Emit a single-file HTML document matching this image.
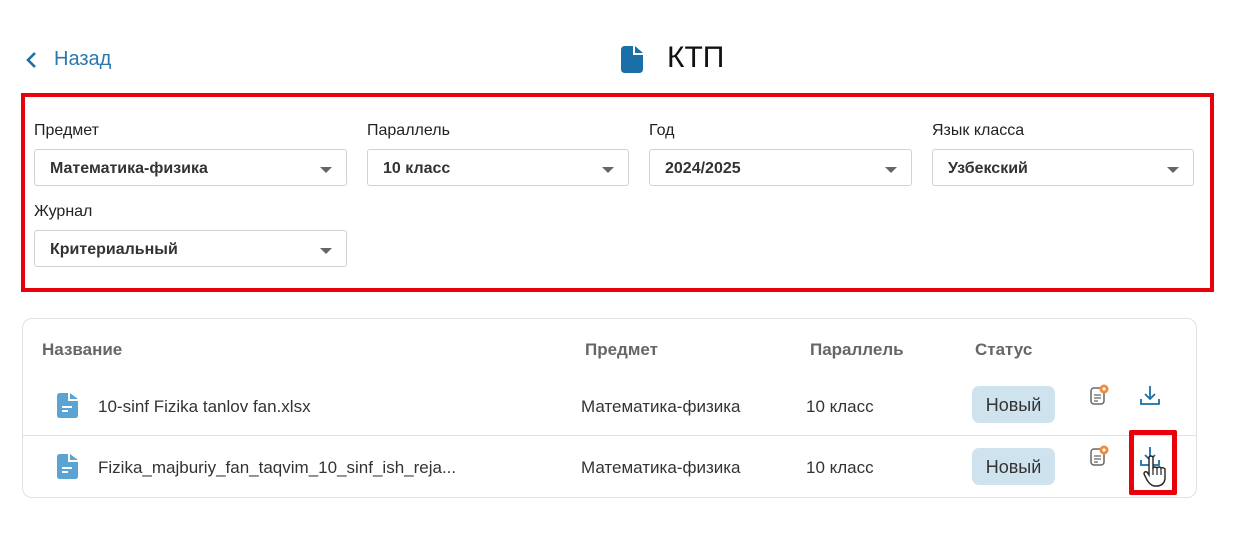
<!DOCTYPE html>
<html><head><meta charset="utf-8"><style>
*{box-sizing:border-box;margin:0;padding:0}
body{width:1258px;height:541px;background:#fff;font-family:"Liberation Sans",sans-serif;position:relative;overflow:hidden;color:#222}
.abs{position:absolute}
.lbl{font-size:16px;color:#222}
.sel{position:absolute;height:37px;border:1px solid #cfd3d8;border-radius:3px;font-weight:bold;font-size:16px;color:#333;padding:10px 0 0 15px}
.sel:after{content:"";position:absolute;right:14px;top:17px;border-left:6px solid transparent;border-right:6px solid transparent;border-top:6px solid #666}
.th{font-weight:bold;font-size:17px;color:#666}
.td{font-size:17px;color:#333}
.badge{position:absolute;width:83px;height:37px;background:#cfe3ee;border-radius:7px;font-size:18px;color:#333;text-align:center;line-height:38px}
</style></head><body>
<svg class="abs" style="left:25px;top:51px" width="14" height="18" viewBox="0 0 14 18"><path d="M10 2 L3 9 L10 16" fill="none" stroke="#1a6fa8" stroke-width="2.6"/></svg>
<div class="abs" style="left:54px;top:48px;font-size:20px;color:#2a78ad">Назад</div>
<svg class="abs" style="left:621px;top:46px" width="22" height="27" viewBox="0 0 22 27"><path d="M4 0 H12 V9 H22 V23 Q22 27 18 27 H4 Q0 27 0 23 V4 Q0 0 4 0Z M14 0 L22 7 H14Z" fill="#1a6fa8"/></svg>
<div class="abs" style="left:667px;top:41px;font-size:30px;color:#111">КТП</div>
<div class="abs" style="left:21px;top:93px;width:1193px;height:199px;border:4px solid #e8000b"></div>
<div class="abs lbl" style="left:34px;top:122px">Предмет</div>
<div class="abs lbl" style="left:367px;top:122px">Параллель</div>
<div class="abs lbl" style="left:649px;top:122px">Год</div>
<div class="abs lbl" style="left:932px;top:122px">Язык класса</div>
<div class="sel" style="left:34px;top:149px;width:313px">Математика-физика</div>
<div class="sel" style="left:367px;top:149px;width:262px">10 класс</div>
<div class="sel" style="left:649px;top:149px;width:263px">2024/2025</div>
<div class="sel" style="left:932px;top:149px;width:262px">Узбекский</div>
<div class="abs lbl" style="left:34px;top:203px">Журнал</div>
<div class="sel" style="left:34px;top:230px;width:313px">Критериальный</div>
<div class="abs" style="left:22px;top:318px;width:1175px;height:180px;border:1px solid #dde2e7;border-radius:10px"></div>
<div class="abs th" style="left:42px;top:340px">Название</div>
<div class="abs th" style="left:585px;top:340px">Предмет</div>
<div class="abs th" style="left:810px;top:340px">Параллель</div>
<div class="abs th" style="left:975px;top:340px">Статус</div>
<div class="abs" style="left:23px;top:435px;width:1173px;height:1px;background:#dde2e7"></div>
<svg class="abs" style="left:57px;top:393px" width="21" height="25" viewBox="0 0 21 25"><path d="M3 0 H11 V8 H21 V22 Q21 25 18 25 H3 Q0 25 0 22 V3 Q0 0 3 0Z M13 0 L21 6 H13Z" fill="#5aa3d2"/><path d="M5 14 H15 M5 18 H11" stroke="#fff" stroke-width="2"/></svg>
<svg class="abs" style="left:57px;top:454px" width="21" height="25" viewBox="0 0 21 25"><path d="M3 0 H11 V8 H21 V22 Q21 25 18 25 H3 Q0 25 0 22 V3 Q0 0 3 0Z M13 0 L21 6 H13Z" fill="#5aa3d2"/><path d="M5 14 H15 M5 18 H11" stroke="#fff" stroke-width="2"/></svg>
<div class="abs td" style="left:98px;top:397px">10-sinf Fizika tanlov fan.xlsx</div>
<div class="abs td" style="left:98px;top:458px">Fizika_majburiy_fan_taqvim_10_sinf_ish_reja...</div>
<div class="abs td" style="left:581px;top:397px">Математика-физика</div>
<div class="abs td" style="left:581px;top:458px">Математика-физика</div>
<div class="abs td" style="left:806px;top:397px">10 класс</div>
<div class="abs td" style="left:806px;top:458px">10 класс</div>
<div class="badge" style="left:972px;top:386px">Новый</div>
<div class="badge" style="left:972px;top:448px">Новый</div>
<svg class="abs" style="left:1089px;top:384px" width="22" height="22" viewBox="0 0 22 22"><rect x="2" y="4" width="13" height="16" rx="3" fill="none" stroke="#666" stroke-width="1.5"/><path d="M5 11 H12 M5 14 H12 M5 17 H9" stroke="#666" stroke-width="1.3"/><circle cx="15" cy="5" r="4.5" fill="#f08a3c"/><circle cx="15" cy="5" r="1.6" fill="#fff"/></svg>
<svg class="abs" style="left:1089px;top:445px" width="22" height="22" viewBox="0 0 22 22"><rect x="2" y="4" width="13" height="16" rx="3" fill="none" stroke="#666" stroke-width="1.5"/><path d="M5 11 H12 M5 14 H12 M5 17 H9" stroke="#666" stroke-width="1.3"/><circle cx="15" cy="5" r="4.5" fill="#f08a3c"/><circle cx="15" cy="5" r="1.6" fill="#fff"/></svg>
<svg class="abs" style="left:1139px;top:385px" width="22" height="22" viewBox="0 0 22 22"><path d="M11 1 V14 M6 9 L11 14 L16 9 M2 14 V19 H20 V14" fill="none" stroke="#1a6fa8" stroke-width="1.8"/></svg>
<svg class="abs" style="left:1139px;top:446px" width="22" height="22" viewBox="0 0 22 22"><path d="M11 1 V14 M6 9 L11 14 L16 9 M2 14 V19 H20 V14" fill="none" stroke="#1a6fa8" stroke-width="1.8"/></svg>
<svg class="abs" style="left:1143px;top:455px" width="24" height="32" viewBox="0 0 24 32"><path d="M6 2 Q8 0 10 2 V13 Q12 11 14 13 Q16 11 18 13 Q20 12 22 14 V24 Q21 30 15 31 H11 Q7 30 4 25 L1 19 Q1 16 4 17 L6 20Z" fill="#fff" stroke="#222" stroke-width="1.4"/><path d="M10 13 V20 M14 13 V20 M18 13 V20" stroke="#222" stroke-width="1.2"/></svg>
<div class="abs" style="left:1129px;top:430px;width:48px;height:65px;border:5px solid #e8000b;border-radius:2px"></div>
</body></html>
